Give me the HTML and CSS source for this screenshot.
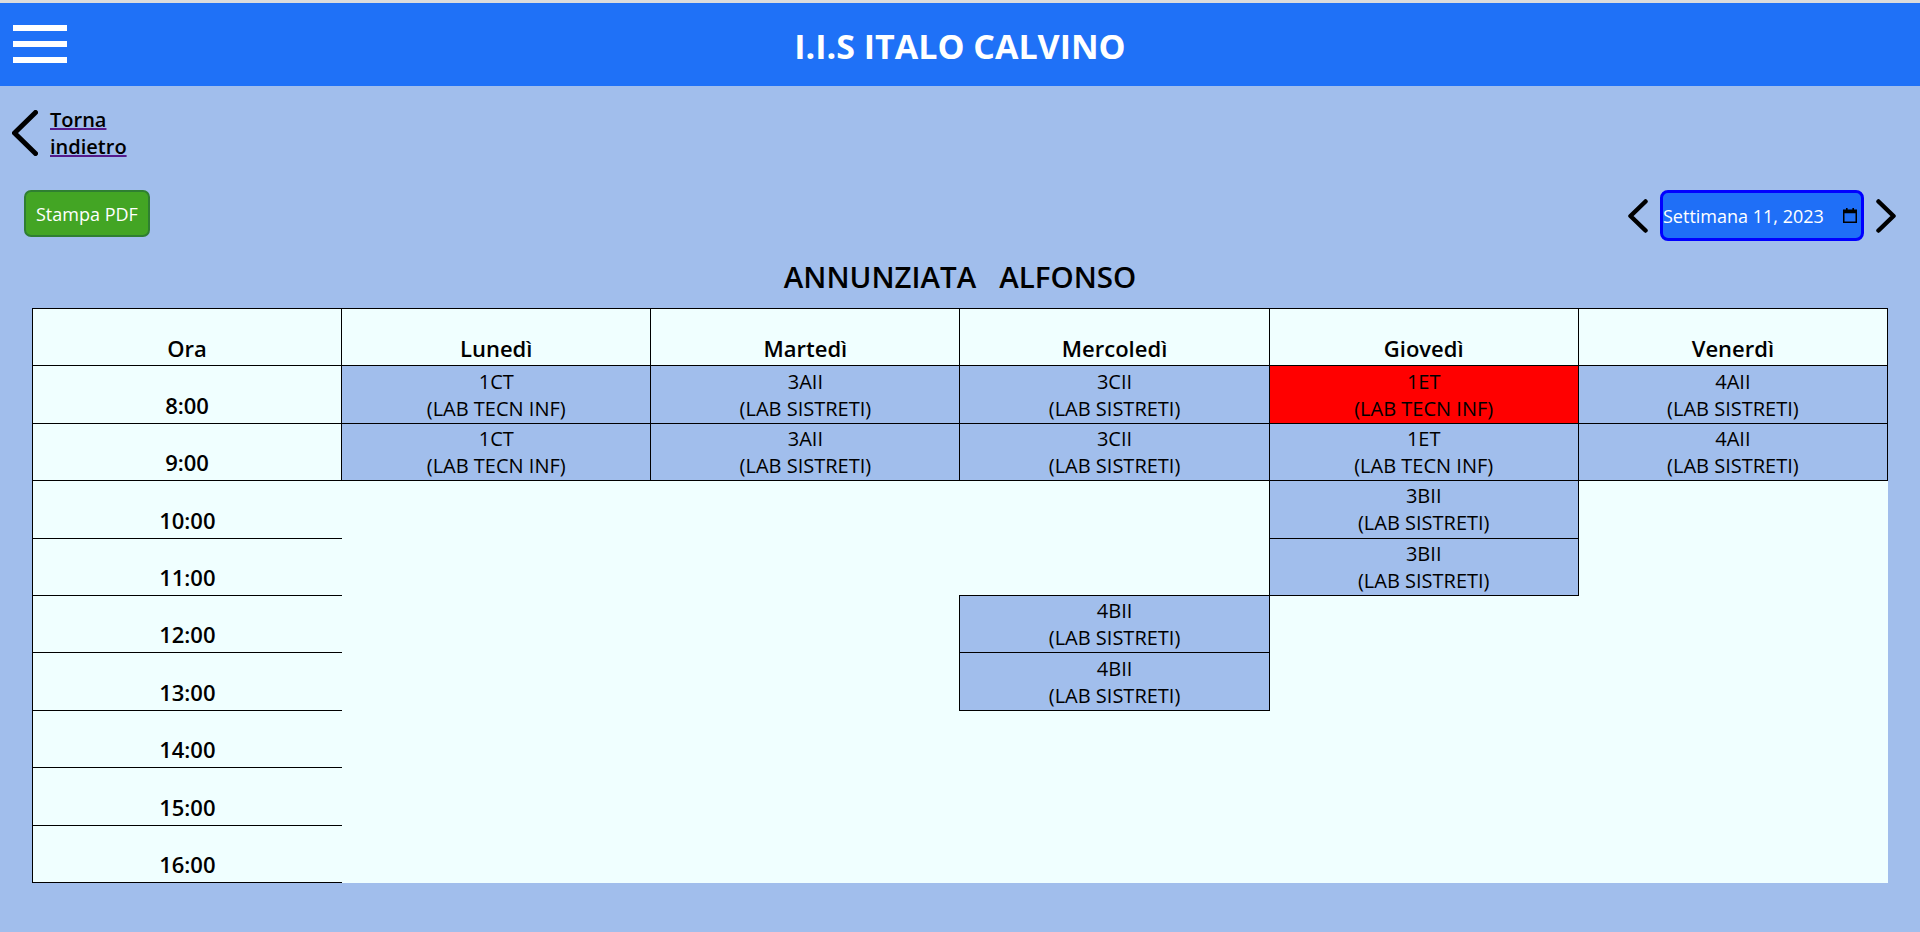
FILE: index.html
```html
<!DOCTYPE html>
<html lang="it">
<head>
<meta charset="utf-8">
<title>Orario - I.I.S Italo Calvino</title>
<link rel="stylesheet" href="styles.css">
</head>
<body>
<header class="topbar">
  <div class="burger" aria-label="Menu"><span></span><span></span><span></span></div>
  <h1 class="brand">I.I.S ITALO CALVINO</h1>
  <div class="topbar-spacer"></div>
</header>
<main class="page">
  <a class="back" href="#">
    <svg class="back-icon" width="26" height="46" viewBox="0 0 26 46"><polyline points="23.5,2.5 2.5,23 23.5,43.5" fill="none" stroke="#000" stroke-width="5" stroke-linecap="round" stroke-linejoin="round"/></svg>
    <span class="back-label">Torna indietro</span>
  </a>
  <div class="toolbar">
    <button class="pdf-btn">Stampa PDF</button>
    <div class="week-nav">
      <svg class="week-arrow" width="20" height="34" viewBox="0 0 20 34"><polyline points="17.5,2.5 2.5,17 17.5,31.5" fill="none" stroke="#000" stroke-width="4.5" stroke-linecap="round" stroke-linejoin="round"/></svg>
      <div class="week-box">
        <span class="week-text">Settimana 11, 2023</span>
        <svg class="cal-icon" width="14" height="15" viewBox="0 0 14 15"><rect x="0.75" y="2.25" width="12.5" height="12" fill="none" stroke="#000" stroke-width="1.5"/><rect x="0.75" y="2.25" width="12.5" height="3" fill="#000"/><rect x="3" y="0" width="1.6" height="3" fill="#000"/><rect x="9.4" y="0" width="1.6" height="3" fill="#000"/></svg>
      </div>
      <svg class="week-arrow" width="20" height="34" viewBox="0 0 20 34"><polyline points="2.5,2.5 17.5,17 2.5,31.5" fill="none" stroke="#000" stroke-width="4.5" stroke-linecap="round" stroke-linejoin="round"/></svg>
    </div>
  </div>
  <h2 class="teacher">ANNUNZIATA&nbsp;&nbsp; ALFONSO</h2>
  <table class="schedule">
    <thead>
      <tr class="slot">
        <th>Ora</th><th>Lunedì</th><th>Martedì</th><th>Mercoledì</th><th>Giovedì</th><th>Venerdì</th>
      </tr>
    </thead>
    <tbody>
      <tr class="slot">
        <td class="time">8:00</td>
        <td class="lesson">1CT<br>(LAB TECN INF)</td>
        <td class="lesson">3AII<br>(LAB SISTRETI)</td>
        <td class="lesson">3CII<br>(LAB SISTRETI)</td>
        <td class="lesson current">1ET<br>(LAB TECN INF)</td>
        <td class="lesson">4AII<br>(LAB SISTRETI)</td>
      </tr>
      <tr class="slot">
        <td class="time">9:00</td>
        <td class="lesson">1CT<br>(LAB TECN INF)</td>
        <td class="lesson">3AII<br>(LAB SISTRETI)</td>
        <td class="lesson">3CII<br>(LAB SISTRETI)</td>
        <td class="lesson">1ET<br>(LAB TECN INF)</td>
        <td class="lesson">4AII<br>(LAB SISTRETI)</td>
      </tr>
      <tr class="slot">
        <td class="time">10:00</td>
        <td></td><td></td><td></td>
        <td class="lesson">3BII<br>(LAB SISTRETI)</td>
        <td></td>
      </tr>
      <tr class="slot">
        <td class="time">11:00</td>
        <td></td><td></td><td></td>
        <td class="lesson">3BII<br>(LAB SISTRETI)</td>
        <td></td>
      </tr>
      <tr class="slot">
        <td class="time">12:00</td>
        <td></td><td></td>
        <td class="lesson">4BII<br>(LAB SISTRETI)</td>
        <td></td><td></td>
      </tr>
      <tr class="slot">
        <td class="time">13:00</td>
        <td></td><td></td>
        <td class="lesson">4BII<br>(LAB SISTRETI)</td>
        <td></td><td></td>
      </tr>
      <tr class="slot">
        <td class="time">14:00</td>
        <td></td><td></td><td></td><td></td><td></td>
      </tr>
      <tr class="slot">
        <td class="time">15:00</td>
        <td></td><td></td><td></td><td></td><td></td>
      </tr>
      <tr class="slot">
        <td class="time">16:00</td>
        <td></td><td></td><td></td><td></td><td></td>
      </tr>
    </tbody>
  </table>
</main>
</body>
</html>
```

FILE: styles.css
```css
* { box-sizing: border-box; }

html, body {
  margin: 0;
  padding: 0;
}

body {
  background: #a1beec;
  font-family: "Open Sans", "Noto Sans", "Liberation Sans", sans-serif;
  color: #000;
  border-top: 3px solid #dcdcdc;
  min-height: 932px;
}

.topbar {
  height: 83px;
  background: #1f71f7;
  display: grid;
  grid-template-columns: 1fr auto 1fr;
  align-items: center;
}

.burger {
  display: flex;
  flex-direction: column;
  gap: 10px;
  width: 54px;
  margin-left: 13px;
  margin-top: -2px;
}

.burger span {
  display: block;
  height: 6px;
  background: #fff;
}

.brand {
  margin: 0;
  color: #fff;
  font-size: 34px;
  font-weight: 700;
  line-height: 1;
  padding-top: 2px;
}

.page {
  padding-bottom: 40px;
}

.back {
  display: inline-flex;
  align-items: center;
  gap: 12px;
  margin: 20px 0 0 12px;
  text-decoration: none;
}

.back-icon { display: block; }

.back-label {
  width: 80px;
  font-size: 20px;
  font-weight: 600;
  color: #000;
  text-decoration: underline;
  text-decoration-color: #551a8b;
  text-decoration-thickness: 2px;
}

.toolbar {
  display: flex;
  justify-content: space-between;
  align-items: flex-start;
  padding: 0 24px;
  margin-top: 29px;
}

.pdf-btn {
  height: 47px;
  padding: 0 10px;
  border: 2px solid #2f7f31;
  border-radius: 7px;
  background: #43a524;
  color: #fff;
  font-family: inherit;
  font-size: 18px;
  font-weight: 400;
}

.week-nav {
  display: flex;
  align-items: center;
  gap: 12px;
}

.week-arrow { display: block; }

.week-box {
  width: 204px;
  height: 51px;
  border: 3px solid #0000ff;
  border-radius: 8px;
  background: #1f6ff7;
  color: #fff;
  font-size: 18px;
  display: flex;
  align-items: center;
  justify-content: space-between;
  padding: 0 4px 0 0;
}

.cal-icon { display: block; }

.teacher {
  margin: 17px 0 12px;
  text-align: center;
  font-size: 29.5px;
  font-weight: 600;
  line-height: 38px;
}

.schedule {
  margin-left: 32px;
  width: 1856px;
  table-layout: fixed;
  border-collapse: collapse;
  background: #f0ffff;
}

.slot { height: 57.4px; }

.schedule th {
  border: 1px solid #000;
  font-size: 22px;
  font-weight: 600;
  vertical-align: bottom;
  padding: 1px 1px 2px;
}

.schedule td {
  padding: 1px;
  text-align: center;
}

.schedule td.time {
  border-left: 1px solid #000;
  border-bottom: 1px solid #000;
  font-size: 22px;
  font-weight: 600;
  vertical-align: bottom;
  padding-bottom: 3px;
}

.schedule td.lesson {
  border: 1px solid #000;
  background: #a1beec;
  font-size: 20px;
  vertical-align: middle;
}

.schedule td.current {
  background: #ff0000;
}
```
